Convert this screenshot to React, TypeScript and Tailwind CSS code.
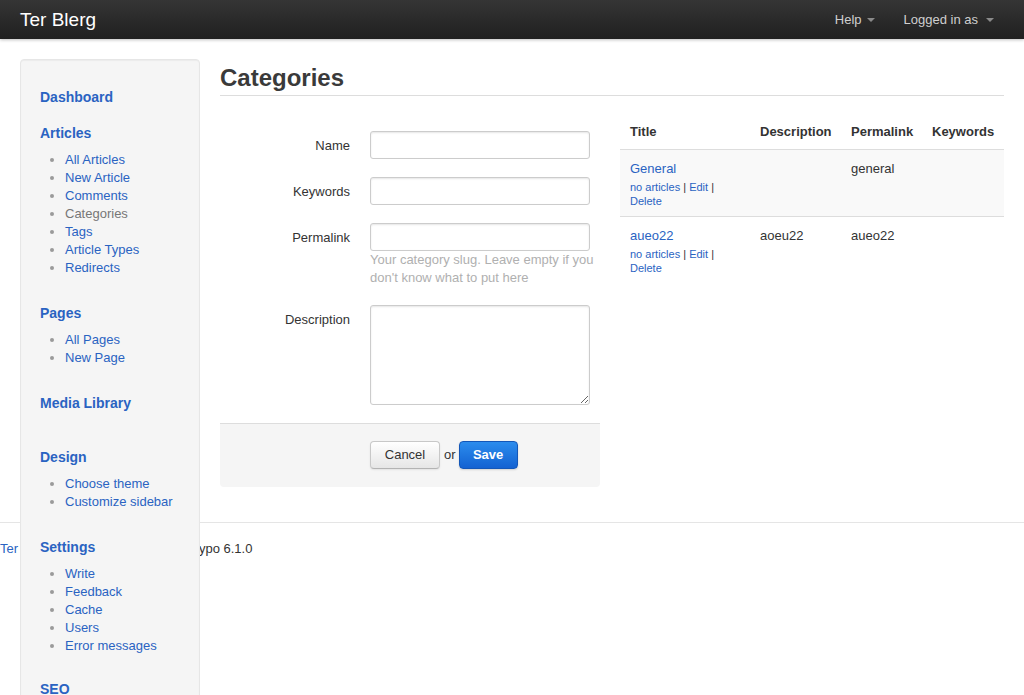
import React from "react";

const linkBlue = "text-[#2a63c2]";

function Caret() {
  return (
    <span className="inline-block w-0 h-0 border-x-[4px] border-x-transparent border-t-[4px] border-t-[#8a8a8a] align-middle" />
  );
}

function Section({
  title,
  items,
  active,
  className = "",
}: {
  title: string;
  items?: string[];
  active?: string;
  className?: string;
}) {
  return (
    <div className={className}>
      <div className={`text-[14px] leading-[18px] font-bold ${linkBlue}`}>{title}</div>
      {items && (
        <ul className="mt-[9px] pl-[25px] list-disc marker:text-[#9a9a9a]">
          {items.map((it) => (
            <li
              key={it}
              className={`text-[13px] leading-[18px] ${it === active ? "text-[#777]" : linkBlue}`}
            >
              {it}
            </li>
          ))}
        </ul>
      )}
    </div>
  );
}

function Field({
  label,
  children,
  className = "",
}: {
  label: string;
  children: React.ReactNode;
  className?: string;
}) {
  return (
    <div className={`flex items-start ${className}`}>
      <div className="w-[130px] shrink-0 text-right pt-[6px] text-[13px] leading-[18px] text-[#333]">{label}</div>
      <div className="ml-[20px] w-[220px] shrink-0">{children}</div>
    </div>
  );
}

const inputCls =
  "block w-[220px] h-[28px] bg-white border border-[#cccccc] rounded-[3px] shadow-[inset_0_1px_2px_rgba(0,0,0,0.1)] outline-none";

export default function App() {
  return (
    <div className="font-['Liberation_Sans',Arial,sans-serif] text-[13px] text-[#333] bg-white min-h-[695px] overflow-hidden">
      {/* Navbar */}
      <div className="h-[39px] bg-linear-to-b from-[#353535] to-[#202020] shadow-[0_1px_3px_rgba(0,0,0,0.25)] flex items-center pl-[20px] pr-[30px] relative z-20">
        <div className="text-[19px] leading-[24px] text-white">Ter Blerg</div>
        <div className="ml-auto flex items-center text-[13px] text-[#cfcfcf]">
          <span>Help</span>
          <span className="ml-[5px] flex items-center">
            <Caret />
          </span>
          <span className="ml-[29px]">Logged in as</span>
          <span className="ml-[8px] flex items-center">
            <Caret />
          </span>
        </div>
      </div>

      {/* Content */}
      <div className="h-[483px] flex gap-[20px] px-[20px] pt-[20px]">
        <aside className="relative z-10 w-[180px] shrink-0 self-start bg-[#f5f5f5] border border-[#e6e6e6] rounded-[4px] shadow-[inset_0_1px_1px_rgba(0,0,0,0.04)] pl-[19px] pt-[28px] pb-[40px]">
          <Section title="Dashboard" />
          <Section
            className="mt-[18px]"
            title="Articles"
            active="Categories"
            items={["All Articles", "New Article", "Comments", "Categories", "Tags", "Article Types", "Redirects"]}
          />
          <Section className="mt-[27px]" title="Pages" items={["All Pages", "New Page"]} />
          <Section className="mt-[27px]" title="Media Library" />
          <Section className="mt-[36px]" title="Design" items={["Choose theme", "Customize sidebar"]} />
          <Section
            className="mt-[27px]"
            title="Settings"
            items={["Write", "Feedback", "Cache", "Users", "Error messages"]}
          />
          <Section className="mt-[25px]" title="SEO" items={["Global SEO settings", "Permalinks", "Titles"]} />
        </aside>

        <main className="flex-1 min-w-0">
          <h1 className="pt-[1px] text-[24px] leading-[35px] font-bold text-[#3a3a3a] border-b border-[#dddddd]">
            Categories
          </h1>

          <div className="mt-[18px] flex gap-[20px]">
            {/* Form */}
            <div className="w-[380px] shrink-0">
              <div className="pt-[17px]">
                <Field label="Name" className="mb-[18px]">
                  <input className={inputCls} />
                </Field>
                <Field label="Keywords" className="mb-[18px]">
                  <input className={inputCls} />
                </Field>
                <Field label="Permalink" className="mb-[18px]">
                  <input className={inputCls} />
                  <p className="w-[232px] text-[13px] leading-[18px] text-[#b0b0b0]">
                    Your category slug. Leave empty if you don't know what to put here
                  </p>
                </Field>
                <Field label="Description" className="mb-[18px]">
                  <textarea className="block w-[220px] h-[100px] bg-white border border-[#cccccc] rounded-[3px] shadow-[inset_0_1px_2px_rgba(0,0,0,0.1)] outline-none" />
                </Field>
              </div>
              <div className="bg-[#f5f5f5] border-t border-[#dddddd] rounded-b-[4px] pl-[150px] pt-[17px] pb-[18px] flex items-center">
                <button className="w-[70px] h-[28px] rounded-[4px] border border-[#c8c8c8] border-b-[#b3b3b3] bg-linear-to-b from-white to-[#e6e6e6] text-[13px] text-[#333] shadow-[0_1px_2px_rgba(0,0,0,0.08)]">
                  Cancel
                </button>
                <span className="ml-[4px] text-[13px] text-[#333]">or</span>
                <button className="ml-[3px] w-[59px] h-[28px] rounded-[4px] border border-[#1457b8] bg-linear-to-b from-[#2c8ced] to-[#1462d2] text-[13px] font-bold text-white shadow-[0_1px_2px_rgba(0,0,0,0.15)]">
                  Save
                </button>
              </div>
            </div>

            {/* Table */}
            <div className="w-[384px] shrink-0">
              <div className="flex border-b border-[#dddddd] font-bold text-[13px] leading-[18px] text-[#333]">
                <div className="w-[130px] pl-[10px] pt-[9px] pb-[8px]">Title</div>
                <div className="w-[91px] pl-[10px] pt-[9px] pb-[8px]">Description</div>
                <div className="w-[81px] pl-[10px] pt-[9px] pb-[8px]">Permalink</div>
                <div className="w-[82px] pl-[10px] pt-[9px] pb-[8px]">Keywords</div>
              </div>
              {[
                { t: "General", d: "", p: "general", bg: "bg-[#f9f9f9]", b: "border-b border-[#dddddd]" },
                { t: "aueo22", d: "aoeu22", p: "aueo22", bg: "bg-white", b: "" },
              ].map((r) => (
                <div key={r.t} className={`flex ${r.b} ${r.bg}`}>
                  <div className="w-[130px] pl-[10px] pt-[10px] pb-[8px]">
                    <div className={`text-[13px] leading-[18px] ${linkBlue}`}>{r.t}</div>
                    <div className="mt-[2px] w-[100px] text-[11px] leading-[14px] text-[#333]">
                      <span className={linkBlue}>no articles</span> | <span className={linkBlue}>Edit</span> |{" "}
                      <span className={linkBlue}>Delete</span>
                    </div>
                  </div>
                  <div className="w-[91px] pl-[10px] pt-[10px] text-[13px] leading-[18px] text-[#333]">{r.d}</div>
                  <div className="w-[81px] pl-[10px] pt-[10px] text-[13px] leading-[18px] text-[#333]">{r.p}</div>
                  <div className="w-[82px] pl-[10px] pt-[10px]" />
                </div>
              ))}
            </div>
          </div>
        </main>
      </div>

      {/* Footer */}
      <footer className="border-t border-[#e5e5e5] pt-[17px] pb-[20px] text-[13px] leading-[18px] text-[#333]">
        <span className={linkBlue}>Ter Blerg</span> is proudly powered by{" "}
        <span className="ml-[6px]">Typo 6.1.0</span>
      </footer>
    </div>
  );
}
